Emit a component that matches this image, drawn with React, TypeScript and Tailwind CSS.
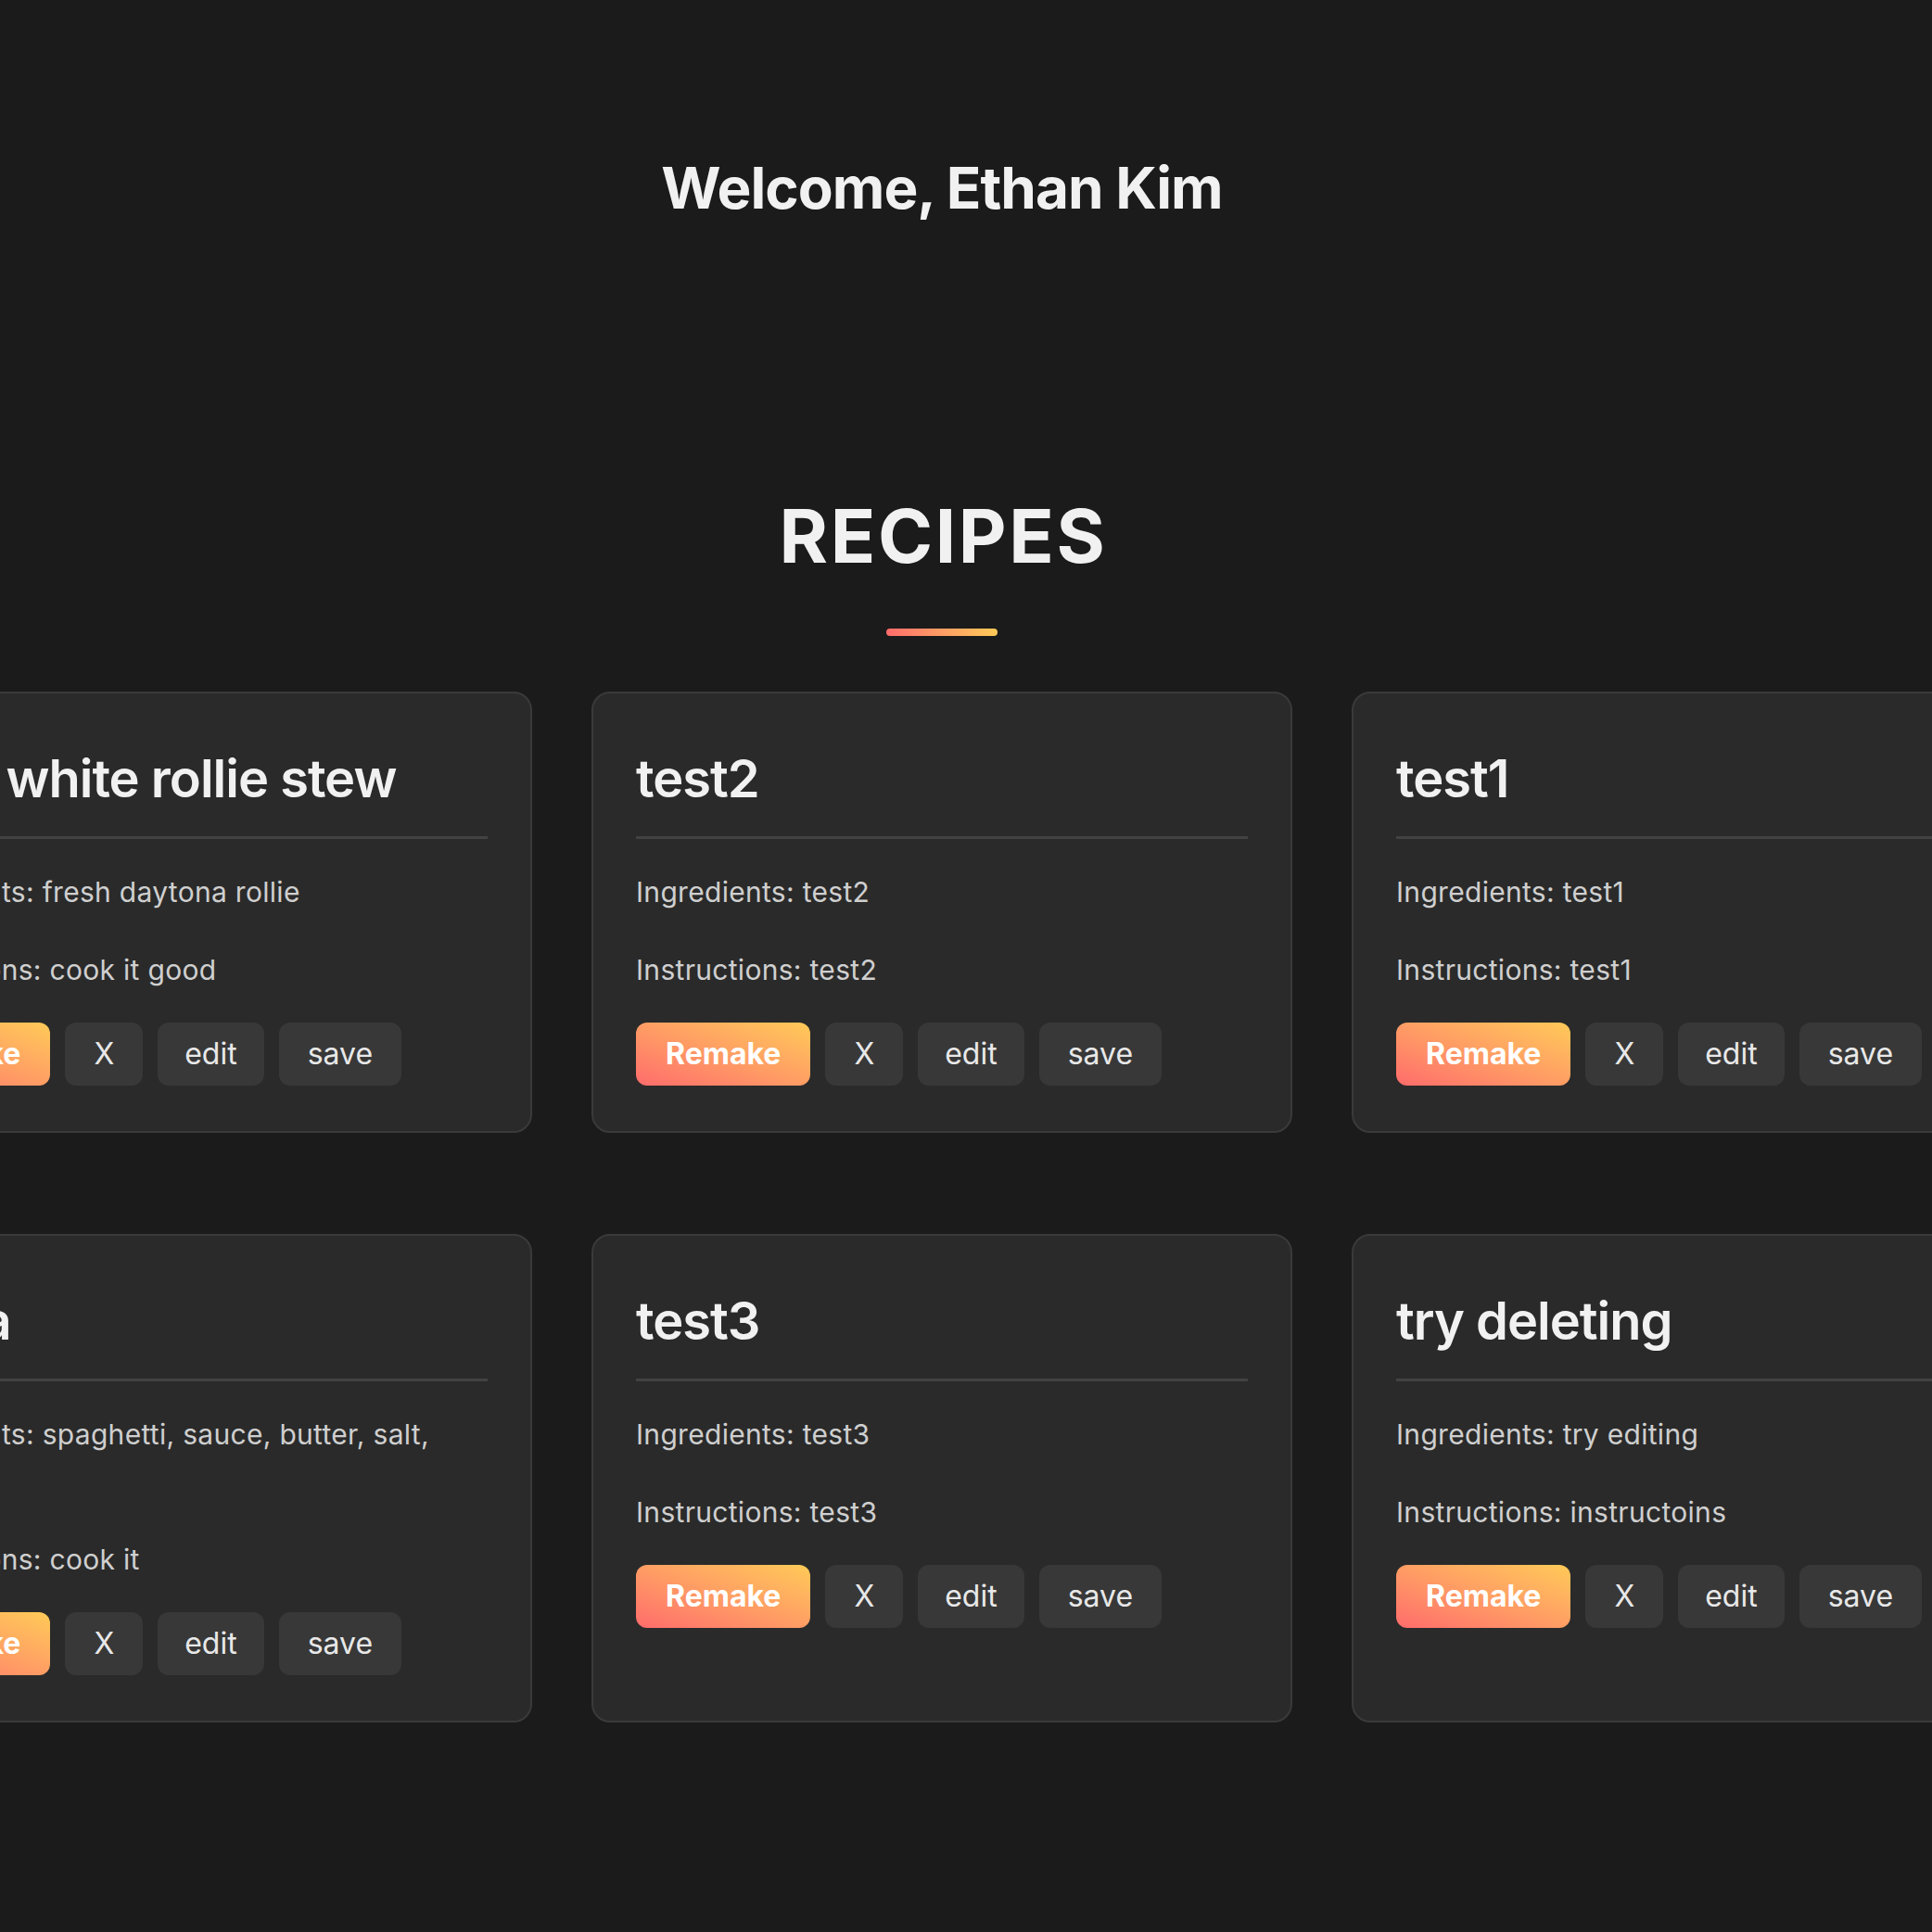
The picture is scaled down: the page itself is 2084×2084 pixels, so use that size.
import React from "react";

type Recipe = {
  name: string;
  ingredients: string;
  instructions: string;
};

const recipes: Recipe[] = [
  { name: "Slow white rollie stew", ingredients: "fresh daytona rollie", instructions: "cook it good" },
  { name: "test2", ingredients: "test2", instructions: "test2" },
  { name: "test1", ingredients: "test1", instructions: "test1" },
  { name: "Pasta", ingredients: "spaghetti, sauce, butter, salt, pepper", instructions: "cook it" },
  { name: "test3", ingredients: "test3", instructions: "test3" },
  { name: "try deleting", ingredients: "try editing", instructions: "instructoins" },
];

const RecipeCard: React.FC<{ recipe: Recipe }> = ({ recipe }) => {
  return (
    <div className="bg-[#2a2a2a] border-2 border-[#3a3a3a] rounded-[20px] px-[46px] pt-[47px] pb-[49px]">
      {/* Title */}
      <h3 className="pt-[12px] pb-[28px] border-b-[3px] border-[#424242] text-[56px] leading-[67px] font-semibold text-[#f1f1f1] tracking-[-1px]">
        {recipe.name}
      </h3>

      {/* Body */}
      <p className="mt-[32px] text-[30px] leading-[51px] text-[#cfcfcf] tracking-[0.3px]">
        Ingredients: {recipe.ingredients}
      </p>
      <p className="mt-[33px] text-[30px] leading-[51px] text-[#cfcfcf] tracking-[0.3px]">
        Instructions: {recipe.instructions}
      </p>

      {/* Actions */}
      <div className="mt-[31px] flex items-center gap-[16px]">
        <button className="h-[68px] px-[32px] rounded-[12px] bg-linear-to-tr from-[#ff6b6b] to-[#feca57] text-white text-[32px] font-bold">
          Remake
        </button>
        <button className="h-[68px] px-[31px] rounded-[12px] bg-[#383838] text-[#e8e8e8] text-[32px]">X</button>
        <button className="h-[68px] px-[29px] rounded-[12px] bg-[#383838] text-[#e8e8e8] text-[32px]">edit</button>
        <button className="h-[68px] px-[31px] rounded-[12px] bg-[#383838] text-[#e8e8e8] text-[32px]">save</button>
      </div>
    </div>
  );
};

export default function App() {
  return (
    <div className="min-h-screen bg-[#1b1b1b] overflow-hidden font-['Inter',sans-serif]">
      <div className="w-[2032px] flex flex-col items-center pb-[200px]">
        <h1 className="mt-[165px] text-[62px] leading-[75px] font-bold text-[#f1f1f1] tracking-[-1px]">
          Welcome, Ethan Kim
        </h1>

        <h2 className="mt-[289px] text-[80px] leading-[97px] font-bold text-[#f1f1f1] tracking-[2.6px] pl-[3px]">
          RECIPES
        </h2>
        <div className="mt-[52px] w-[120px] h-[8px] rounded-full bg-linear-to-r from-[#ff6b6b] to-[#feca57]" />

        <div className="mt-[60px] grid grid-cols-[repeat(3,756px)] justify-center gap-x-[64px] gap-y-[109px]">
          {recipes.map((r) => (
            <RecipeCard key={r.name} recipe={r} />
          ))}
        </div>
      </div>
    </div>
  );
}
